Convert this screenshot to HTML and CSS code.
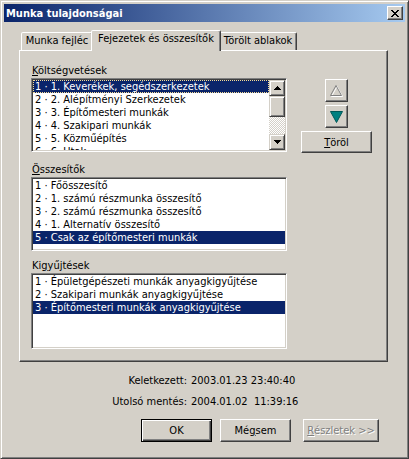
FILE: index.html
```html
<!DOCTYPE html>
<html lang="hu">
<head>
<meta charset="utf-8">
<title>Munka tulajdonságai</title>
<link rel="stylesheet" href="styles.css">
</head>
<body>
<div class="window">
  <div class="titlebar">
    <span class="title">Munka tulajdonságai</span>
    <button class="capbtn" aria-label="Bezárás">
      <svg width="8" height="7" viewBox="0 0 8 7"><path d="M0 0h2v1H0zM6 0h2v1H6zM1 1h2v1H1zM5 1h2v1H5zM2 2h4v1H2zM3 3h2v1H3zM2 4h4v1H2zM1 5h2v1H1zM5 5h2v1H5zM0 6h2v1H0zM6 6h2v1H6z" fill="#000"/></svg>
    </button>
  </div>

  <div class="tabctl">
    <div class="tabs">
      <div class="tab t1">Munka fejléc</div>
      <div class="tab t2 sel">Fejezetek és összesítők</div>
      <div class="tab t3">Törölt ablakok</div>
    </div>
    <div class="panel">
      <div class="lists">
        <div class="group g1">
          <div class="label"><u>K</u>öltségvetések</div>
          <div class="listbox lb1">
            <div class="items">
              <div class="item selected focus">1 · 1. Keverékek, segédszerkezetek</div>
              <div class="item">2 · 2. Alépítményi Szerkezetek</div>
              <div class="item">3 · 3. Építőmesteri munkák</div>
              <div class="item">4 · 4. Szakipari munkák</div>
              <div class="item">5 · 5. Közműépítés</div>
              <div class="item">6 · 6. Utak</div>
            </div>
            <div class="scrollbar">
              <div class="sb-btn"><svg width="7" height="4" viewBox="0 0 7 4"><path d="M3 0h1v1H3zM2 1h3v1H2zM1 2h5v1H1zM0 3h7v1H0z" fill="#000"/></svg></div>
              <div class="sb-thumb"></div>
              <div class="sb-track"></div>
              <div class="sb-btn"><svg width="7" height="4" viewBox="0 0 7 4"><path d="M0 0h7v1H0zM1 1h5v1H1zM2 2h3v1H2zM3 3h1v1H3z" fill="#000"/></svg></div>
            </div>
          </div>
        </div>

        <div class="group g2">
          <div class="label"><u>Ö</u>sszesítők</div>
          <div class="listbox lb2">
            <div class="items">
              <div class="item">1 · Főösszesítő</div>
              <div class="item">2 · 1. számú részmunka összesítő</div>
              <div class="item">3 · 2. számú részmunka összesítő</div>
              <div class="item">4 · 1. Alternatív összesítő</div>
              <div class="item selected">5 · Csak az építőmesteri munkák</div>
            </div>
          </div>
        </div>

        <div class="group g3">
          <div class="label">Ki<u>g</u>yűjtések</div>
          <div class="listbox lb3">
            <div class="items">
              <div class="item">1 · Épületgépészeti munkák anyagkigyűjtése</div>
              <div class="item">2 · Szakipari munkák anyagkigyűjtése</div>
              <div class="item selected">3 · Építőmesteri munkák anyagkigyűjtése</div>
            </div>
          </div>
        </div>
      </div>

      <div class="side">
        <button class="btn sq" aria-label="Fel">
          <svg width="13" height="12" viewBox="0 0 13 12"><polygon points="7,1.5 12.5,11.5 1.5,11.5" fill="none" stroke="#fff"/><polygon points="6,0.5 11.5,10.5 0.5,10.5" fill="none" stroke="#808080"/></svg>
        </button>
        <button class="btn sq" aria-label="Le">
          <svg width="13" height="12" viewBox="0 0 13 12"><polygon points="0.5,0.5 12.5,0.5 6.5,11.5" fill="#008080" stroke="#005858"/></svg>
        </button>
        <button class="btn wide"><u>T</u>öröl</button>
      </div>
    </div>
  </div>

  <div class="info">
    <span class="key">Keletkezett:</span><span class="val">2003.01.23 23:40:40</span>
    <span class="key">Utolsó mentés:</span><span class="val">2004.01.02&nbsp; 11:39:16</span>
  </div>

  <div class="buttons">
    <button class="btn push default">OK</button>
    <button class="btn push">Mé<u>g</u>sem</button>
    <button class="btn push details disabled"><u>R</u>észletek &gt;&gt;</button>
  </div>
</div>
</body>
</html>
```
FILE: styles.css
```css
* { box-sizing: border-box; }

html, body {
  margin: 0;
  padding: 0;
  background: #d4d0c8;
}

body {
  font-family: "DejaVu Sans Condensed", "Liberation Sans", sans-serif;
  font-size: 11px;
  color: #000;
}

.window {
  width: 409px;
  height: 459px;
  background: #d4d0c8;
  border: 1px solid;
  border-color: #d4d0c8 #404040 #404040 #d4d0c8;
  box-shadow: inset 1px 1px #fff, inset -1px -1px #808080;
  padding: 3px;
  display: flex;
  flex-direction: column;
}

/* title bar */
.titlebar {
  height: 18px;
  flex: none;
  background: linear-gradient(to right, #0a246a, #a6caf0);
  display: flex;
  align-items: center;
  justify-content: space-between;
  padding: 0 2px 0 2px;
  color: #fff;
}

.title {
  font-weight: bold;
  font-size: 11px;
  line-height: 13px;
}

.capbtn {
  width: 16px;
  height: 14px;
  padding: 0;
  margin: 0;
  background: #d4d0c8;
  border: 1px solid;
  border-color: #fff #404040 #404040 #fff;
  box-shadow: inset -1px -1px #808080;
  display: flex;
  align-items: center;
  justify-content: center;
}

.capbtn svg { display: block; }

/* tab control */
.tabctl {
  margin: 8px 0 0 15px;
  width: 369px;
}

.tabs {
  display: flex;
  align-items: flex-end;
  height: 20px;
  padding-left: 2px;
}

.tab {
  height: 18px;
  border: 1px solid;
  border-bottom: none;
  border-color: #fff #404040 transparent #fff;
  border-radius: 2px 2px 0 0;
  box-shadow: inset -1px 0 #808080;
  background: #d4d0c8;
  text-align: center;
  line-height: 16px;
  white-space: nowrap;
}

.t1 { width: 72px; }
.t2 { width: 130px; }
.t3 { width: 78px; }

.tab.sel {
  height: 21px;
  margin: 0 -2px -1px -2px;
  line-height: 16px;
  position: relative;
  z-index: 2;
}

.panel {
  height: 312px;
  border: 1px solid;
  border-color: #fff #404040 #404040 #fff;
  box-shadow: inset -1px -1px #808080;
  display: flex;
  padding: 13px 0 0 11px;
}

.lists {
  width: 256px;
  display: flex;
  flex-direction: column;
}

.g2 { margin-top: 11px; }
.g3 { margin-top: 8px; }

.label {
  height: 13px;
  line-height: 13px;
  margin-bottom: 1px;
  padding-left: 1px;
}

.listbox {
  background: #fff;
  border: 1px solid;
  border-color: #808080 #fff #fff #808080;
  box-shadow: inset 1px 1px #404040, inset -1px -1px #d4d0c8;
  padding: 1px;
  display: flex;
  overflow: hidden;
}

.lb1 { height: 74px; }
.lb2 { height: 74px; }
.lb3 { height: 76px; }

.items {
  flex: 1;
  min-width: 0;
  overflow: hidden;
}

.item {
  height: 13px;
  line-height: 13px;
  padding-left: 2px;
  white-space: nowrap;
}

.item.selected {
  background: #0a246a;
  color: #fff;
}

.item.focus {
  outline: 1px dotted #f5db95;
  outline-offset: -1px;
}

/* scrollbar */
.scrollbar {
  width: 16px;
  flex: none;
  display: flex;
  flex-direction: column;
}

.sb-btn, .sb-thumb {
  background: #d4d0c8;
  border: 1px solid;
  border-color: #d4d0c8 #404040 #404040 #d4d0c8;
  box-shadow: inset 1px 1px #fff, inset -1px -1px #808080;
}

.sb-btn {
  height: 16px;
  display: flex;
  align-items: center;
  justify-content: center;
}

.sb-btn svg { display: block; }

.sb-thumb { height: 21px; }

.sb-track {
  flex: 1;
  background-color: #fff;
  background-image: repeating-conic-gradient(#d4d0c8 0 25%, #fff 0 50%);
  background-size: 2px 2px;
}

/* buttons */
.btn {
  font: inherit;
  color: #000;
  margin: 0;
  padding: 0;
  background: #d4d0c8;
  border: 1px solid;
  border-color: #fff #404040 #404040 #fff;
  box-shadow: inset -1px -1px #808080;
  display: flex;
  align-items: center;
  justify-content: center;
  white-space: nowrap;
}

.btn svg { display: block; }

.side {
  width: 71px;
  margin: 15px 0 0 14px;
  display: flex;
  flex-direction: column;
  align-items: center;
  gap: 3px;
}

.sq { width: 23px; height: 23px; }
.wide { width: 71px; height: 22px; }

/* info */
.info {
  display: grid;
  grid-template-columns: 87px auto;
  column-gap: 4px;
  row-gap: 8px;
  margin: 12px 0 0 96px;
  line-height: 13px;
}

.key { text-align: right; white-space: nowrap; }
.val { white-space: pre; }

/* bottom buttons */
.buttons {
  display: flex;
  gap: 8px;
  margin: 11px 0 0 137px;
}

.push { width: 71px; height: 23px; }

.push.default {
  border-color: #000;
  box-shadow: inset 1px 1px #fff, inset -1px -1px #404040, inset -2px -2px #808080;
}

.details { width: 76px; margin-left: 4px; }

.disabled {
  color: #808080;
  text-shadow: 1px 1px #fff;
}
```
